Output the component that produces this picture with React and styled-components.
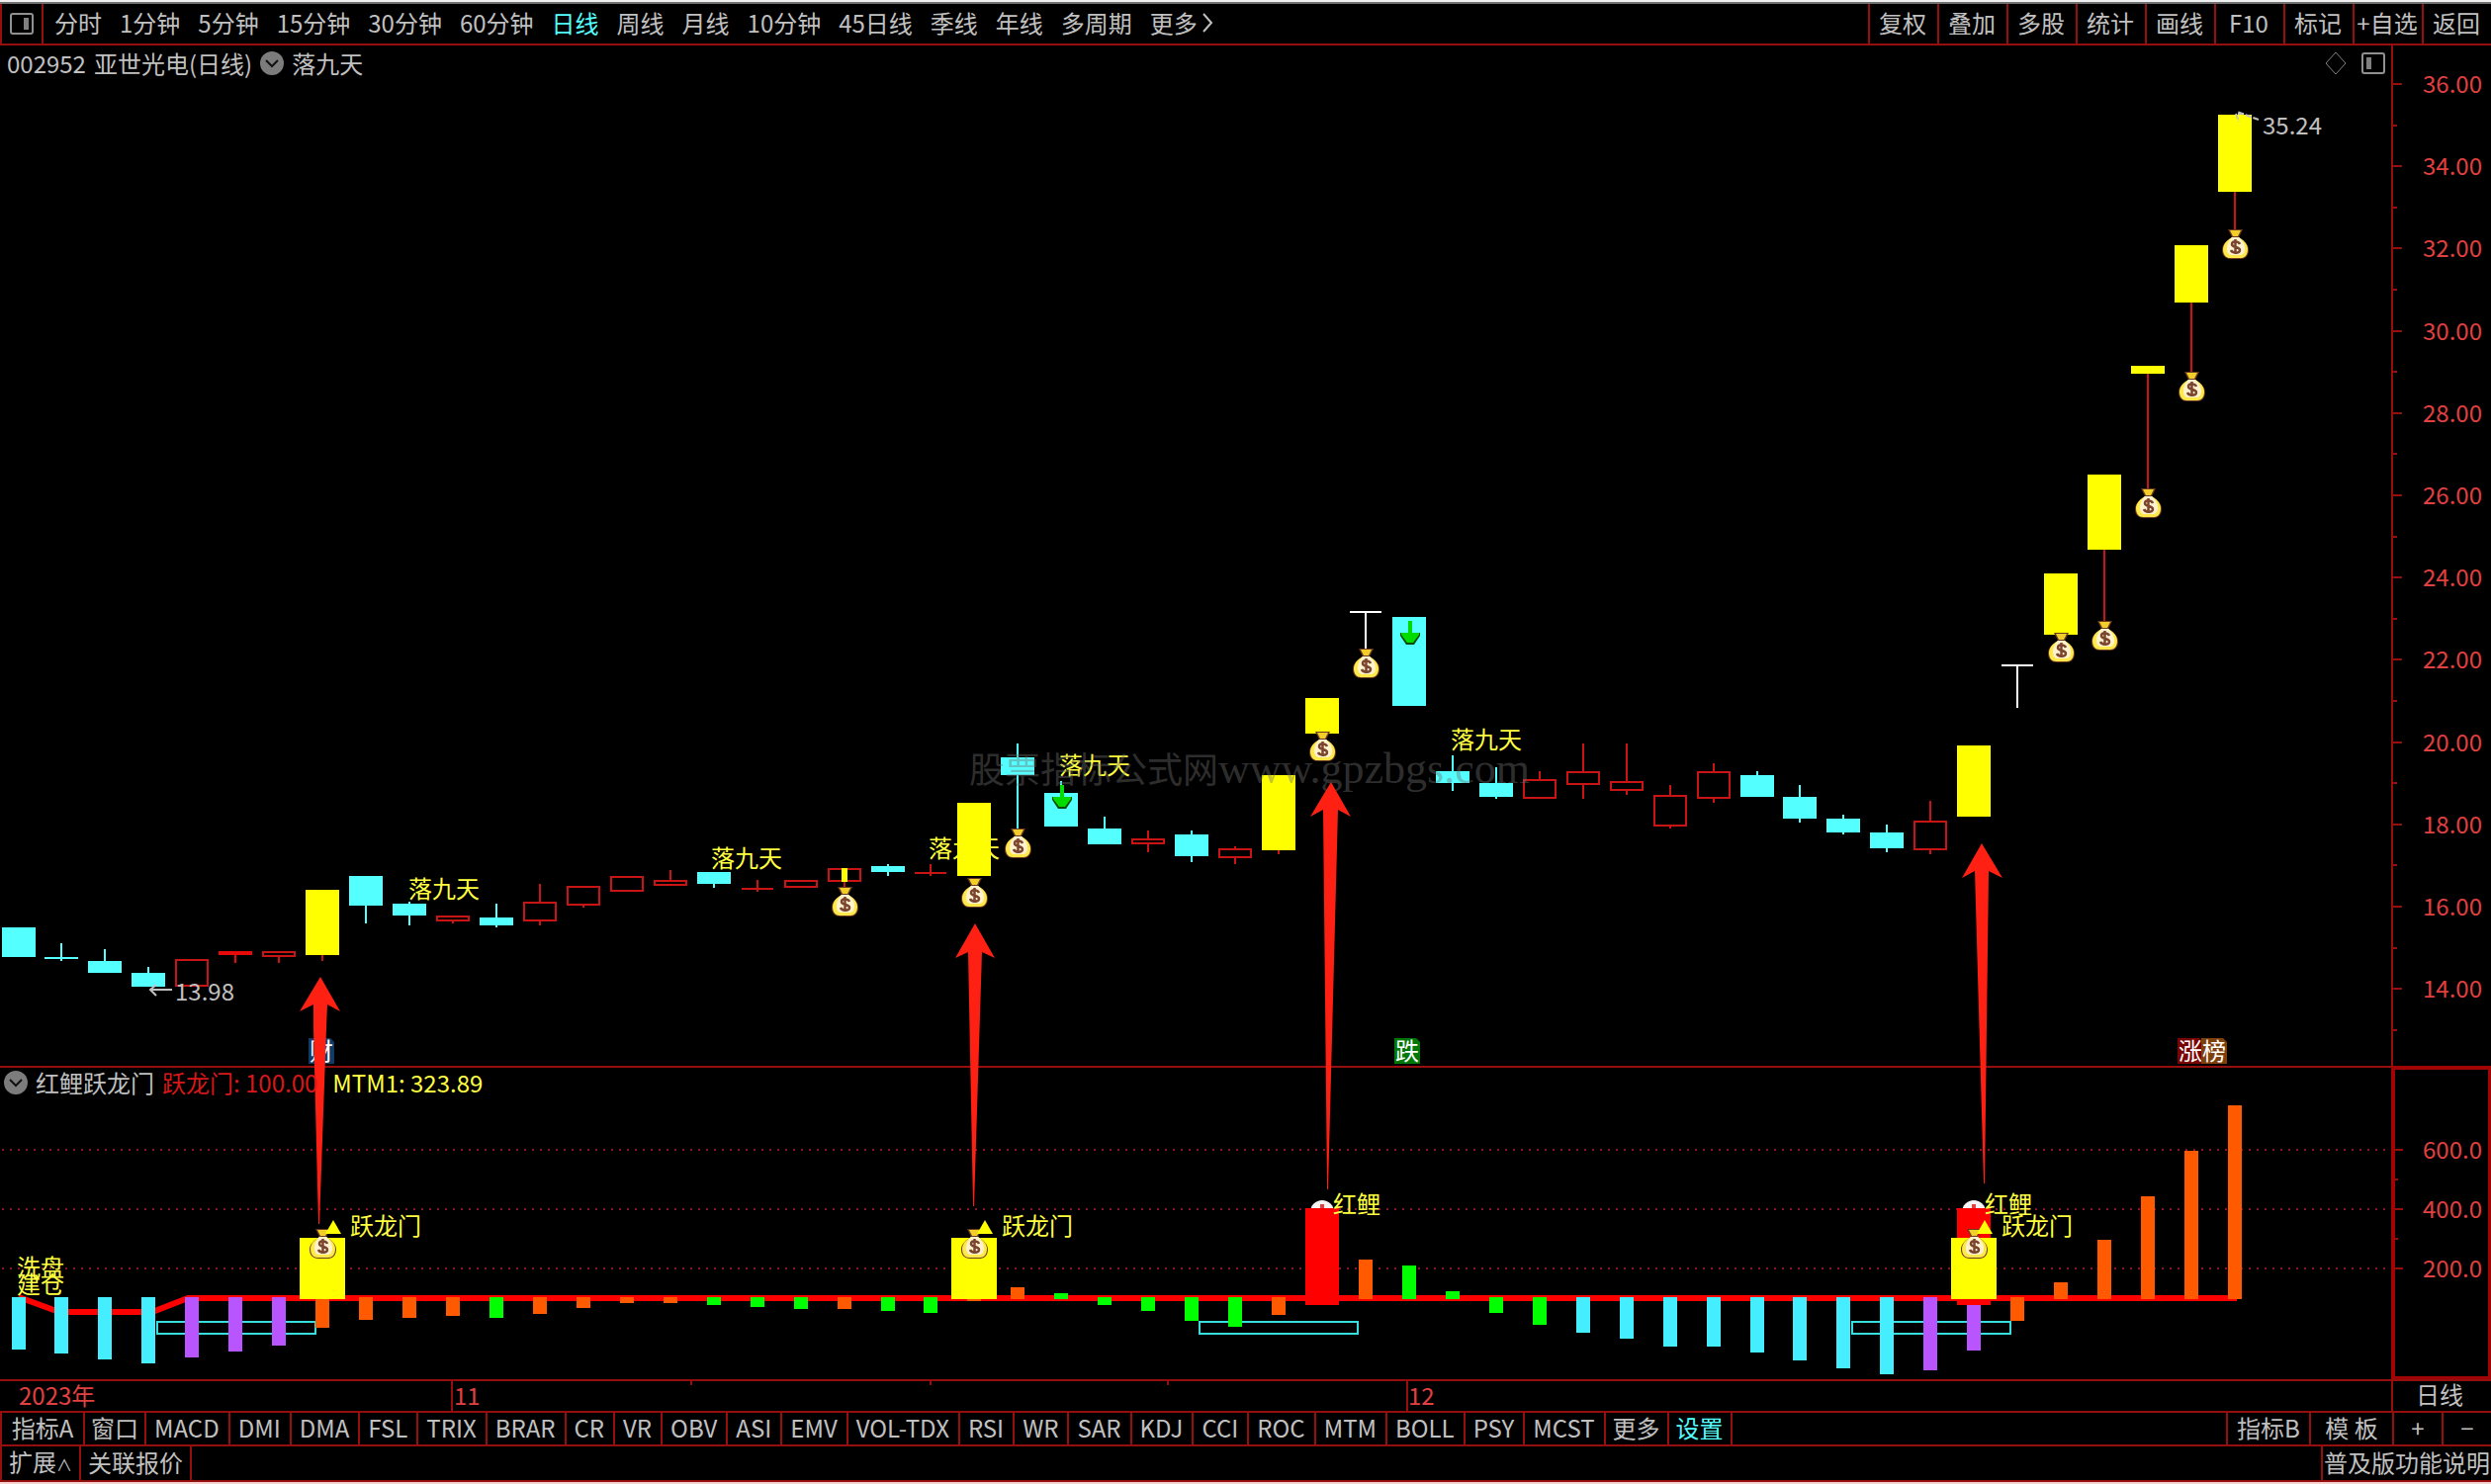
import React from 'react';
import styled, { createGlobalStyle, css } from 'styled-components';

const LINE = '#960f0f';
const GREY = '#c0c0c0';
const CYAN = '#54ffff';
const FONT = '"Noto Sans CJK SC", "Liberation Sans", sans-serif';

const GlobalStyle = createGlobalStyle`
  body {
    margin: 0;
    background: #000;
    color: ${GREY};
    font-family: ${FONT};
    font-size: 24px;
    line-height: 30px;
  }

  button {
    margin: 0;
    padding: 0;
    border: 0;
    background: none;
    color: inherit;
    font: inherit;
    white-space: nowrap;
    cursor: pointer;
  }
`;

const Page = styled.div`
  display: flex;
  flex-direction: column;
  box-sizing: border-box;
  border-top: 2px solid #f0f0f0;
  border-bottom: 2px solid #f8d0d0;
`;

const Toolbar = styled.header`
  display: flex;
  align-items: stretch;
  height: 40px;
  border-top: 2px solid #707070;
  border-bottom: 2px solid ${LINE};
`;

const PanelToggle = styled.button`
  display: flex;
  align-items: center;
  justify-content: center;
  width: 44px;
  border-left: 2px solid ${LINE};
  border-right: 2px solid ${LINE};
`;

const Periods = styled.nav`
  display: flex;
  align-items: center;
  gap: 18px;
  padding: 0 0 2px 11px;
`;

const Period = styled.button`
  display: flex;
  align-items: center;
  color: ${({ $active }) => ($active ? CYAN : GREY)};
`;

const Actions = styled.div`
  display: flex;
  margin-left: auto;
`;

const Action = styled.button`
  box-sizing: border-box;
  width: 70px;
  padding: 0 2px 2px 0;
  border-left: 2px solid ${LINE};
`;

const Charts = styled.main`
  position: relative;
`;

const Panel = styled.section`
  position: relative;
`;

const Plot = styled.svg`
  display: block;
  width: 100%;
  height: auto;
  overflow: visible;
  font-family: ${FONT};
  font-size: 24px;
`;

const Overlay = styled(Plot)`
  position: absolute;
  top: 0;
  left: 0;
  pointer-events: none;
`;

const PanelTitle = styled.div`
  position: absolute;
  top: 0;
  left: 0;
  z-index: 1;
  display: flex;
  align-items: center;
  gap: 8px;
  height: ${({ $height }) => $height}px;
  padding-left: ${({ $indent = 4 }) => $indent}px;
  white-space: pre;
`;

const PanelTools = styled(PanelTitle)`
  left: auto;
  right: 106px;
  gap: 14px;
`;

const Value = styled.span`
  color: ${({ $color }) => $color};
  padding-right: 7px;
`;

const RoundButton = styled.button`
  display: flex;
  width: 24px;
  height: 24px;
`;

const Strip = styled.footer`
  display: flex;
  justify-content: space-between;
  height: ${({ $height }) => $height}px;
  border-bottom: 2px solid ${LINE};
`;

const Tabs = styled.div`
  display: flex;
  border-left: 2px solid ${LINE};
`;

const Tab = styled.button`
  padding: 0 9px 3px 8px;
  border-right: 2px solid ${LINE};
  color: ${({ $active }) => ($active ? CYAN : GREY)};

  ${({ $wide }) => $wide && css`
    box-sizing: border-box;
    width: ${$wide}px;
    padding: 0 0 3px;
  `}

  &:last-child {
    ${({ $open }) => $open && 'border-right: 0;'}
  }
`;

const Caret = styled.span`
  font-size: 16px;
`;

const periods = [
  '分时', '1分钟', '5分钟', '15分钟', '30分钟', '60分钟', '日线', '周线', '月线',
  '10分钟', '45日线', '季线', '年线', '多周期',
];

const actions = ['复权', '叠加', '多股', '统计', '画线', 'F10', '标记', '+自选', '返回'];

const indicators = [
  'MACD', 'DMI', 'DMA', 'FSL', 'TRIX', 'BRAR', 'CR', 'VR', 'OBV', 'ASI', 'EMV', 'VOL-TDX',
  'RSI', 'WR', 'SAR', 'KDJ', 'CCI', 'ROC', 'MTM', 'BOLL', 'PSY', 'MCST',
];

// kind, body top, body bottom, high, low
// c: falling, r: rising, f: filled rising, y: signal, x: doji, t: limit-up open
const candles = [
  ['c', 938, 968], ['c', 968, 970, 954, 972], ['c', 972, 984, 960], ['c', 984, 998, 978],
  ['r', 970, 998], ['f', 962, 966, 962, 974], ['r', 962, 968, 962, 974], ['y', 900, 966, 900, 972],
  ['c', 886, 916, 886, 934], ['c', 914, 926, 912, 936], ['r', 926, 932, 926, 934],
  ['c', 928, 936, 914, 938], ['r', 912, 932, 894, 936], ['r', 896, 916, 896, 918],
  ['r', 886, 902], ['r', 890, 896, 880], ['c', 882, 894, 882, 898], ['x', 898, 900, 890, 902],
  ['r', 890, 898], ['r', 878, 892, 878, 897], ['c', 876, 882, 874, 886], ['x', 882, 884, 874, 886],
  ['y', 812, 886], ['c', 766, 784, 752, 838], ['c', 802, 836, 790], ['c', 838, 854, 826],
  ['r', 848, 854, 840, 862], ['c', 844, 866, 840, 872], ['r', 858, 868, 856, 874],
  ['y', 784, 860, 784, 864], ['y', 706, 742], ['t', 618, 620, 618, 656], ['c', 624, 714],
  ['c', 780, 792, 764, 800], ['c', 792, 806, 776, 808], ['r', 788, 808, 780],
  ['r', 780, 794, 752, 808], ['r', 790, 800, 752, 804], ['r', 804, 836, 794, 838],
  ['r', 780, 808, 772, 812], ['c', 784, 806, 780], ['c', 806, 828, 794, 832],
  ['c', 828, 842, 824, 844], ['c', 842, 858, 834, 862], ['r', 830, 860, 810, 864],
  ['y', 754, 826], ['t', 672, 674, 672, 716], ['y', 580, 642], ['y', 480, 556, 480, 628],
  ['y', 370, 378, 370, 495], ['y', 248, 306, 248, 376], ['y', 116, 194, 116, 232],
];

// colour, free end of the bar
const momentum = [
  ['c', 1365], ['c', 1369], ['c', 1375], ['c', 1379], ['p', 1373], ['p', 1367], ['p', 1361],
  ['o', 1343], ['o', 1335], ['o', 1333], ['o', 1331], ['g', 1333], ['o', 1329], ['o', 1323],
  ['o', 1318], ['o', 1318], ['g', 1320], ['g', 1322], ['g', 1324], ['o', 1324], ['g', 1326],
  ['g', 1328], ['o', 1316], ['o', 1302], ['g', 1308], ['g', 1320], ['g', 1326], ['g', 1336],
  ['g', 1342], ['o', 1330], ['o', 1316], ['o', 1274], ['g', 1280], ['g', 1306], ['g', 1328],
  ['g', 1340], ['c', 1348], ['c', 1354], ['c', 1362], ['c', 1362], ['c', 1368], ['c', 1376],
  ['c', 1384], ['c', 1390], ['p', 1386], ['p', 1366], ['o', 1336], ['o', 1297], ['o', 1254],
  ['o', 1210], ['o', 1164], ['o', 1118],
];

const momentumColors = { c: '#44eeff', p: '#b855ff', o: '#ff5a00', g: '#00ff00' };
const bodyColors = { c: CYAN, r: '#c81414', f: '#e60a0a', y: '#ffff00', x: '#c81414', t: '#ffffff' };
const wickColors = { ...bodyColors, y: '#c81414' };

const bags = [
  [19, 897], [22, 888], [23, 838], [30, 740], [31, 656], [47, 640], [48, 628], [49, 494],
  [50, 376], [51, 232],
];

const fallLabels = [[413, 899], [719, 868], [939, 858], [1071, 774], [1467, 748]];
const prices = [36, 34, 32, 30, 28, 26, 24, 22, 20, 18, 16, 14];
const priceY = price => Math.round(85 + (36 - price) * 41.6);
const barX = index => Math.floor(19 + index * 43.95);

const PanelIcon = ({ left }) => (
  <svg width="26" height="24" viewBox="0 0 26 24" fill="none" stroke="#909090" strokeWidth="2">
    <rect x="2" y="2" width="22" height="20" rx="2" />
    <rect x={left ? 6 : 15} y="6" width="5" height="12" fill="#808080" stroke="none" />
  </svg>
);

const ChevronDisc = () => (
  <svg width="24" height="24" viewBox="0 0 24 24">
    <circle cx="12" cy="12" r="12" fill="#7c7c7c" />
    <path d="M6 9l6 6 6-6" fill="none" stroke="#111" strokeWidth="2" />
  </svg>
);

const Bag = ({ x, y }) => (
  <g transform={`translate(${x - 13} ${y})`}>
    <path d="M6 0h15l-4 8c5 3 10 7 10 13 0 6-4 9-8 9H9c-5 0-9-3-9-9C0 15 5 11 10 8z" fill="#6b3a20" />
    <path d="M8 1h11l-3 6h-5z" fill="#f2cf28" />
    <path d="M10 8h7c5 3 9 7 9 12 0 6-3 9-7 9H8c-4 0-7-3-7-9 0-5 4-9 9-12z" fill="#ffe94a" />
    <path d="M10 8h7c4 4 6 7 6 11 0 5-2 7-5 7H10c-3 0-5-2-5-7 0-4 2-8 5-11z" fill="#fff3cf" />
    <path
      d="M18 15c-1-3-8-4-8 0 0 4 8 2 8 6 0 4-8 3-9 0M13.500 10v15"
      fill="none"
      stroke="#7b4530"
      strokeWidth="2.500"
    />
  </g>
);

const SellArrow = ({ x, y }) => (
  <g>
    <path d={`M${x - 10} ${y + 12}h20v3l-6 9h-8l-6-9z`} fill="#064a06" />
    <path d={`M${x - 2} ${y}h4v12h7v2l-6 8h-6l-6-8v-2h7z`} fill="#00dc00" />
  </g>
);

const Candle = ({ x, data }) => {
  const [kind, top, bottom, high = top, low = bottom] = data;
  const half = kind === 'x' || kind === 't' ? 16 : 17;
  return (
    <g>
      {high < top && <rect x={x - 1} y={high} width="2" height={top - high} fill={wickColors[kind]} />}
      {low > bottom && <rect x={x - 1} y={bottom} width="2" height={low - bottom} fill={wickColors[kind]} />}
      {kind === 'r' ? (
        <rect
          x={x - 16}
          y={top + 1}
          width="32"
          height={bottom - top - 2}
          fill="none"
          stroke={bodyColors.r}
          strokeWidth="2"
        />
      ) : (
        <rect x={x - half} y={top} width={half * 2} height={bottom - top} fill={bodyColors[kind]} />
      )}
    </g>
  );
};

const Badge = ({ x, fill, children }) => (
  <g>
    <path d={`M${x} 1050h22l4 4v22h-26z`} fill={fill} />
    <text x={x + 1} y="1072" fill="#fff">{children}</text>
  </g>
);

const PriceChart = () => (
  <Plot viewBox="0 46 2519 1034" role="img" aria-label="亚世光电 日线">
    {fallLabels.map(([x, y]) => (
      <text key={x} x={x} y={y + 9} fill="#ffff40">落九天</text>
    ))}
    {candles.map((data, i) => <Candle key={i} x={barX(i)} data={data} />)}
    <rect x={barX(19) - 3} y="878" width="6" height="14" fill="#ffff00" />
    <SellArrow x={1074} y={794} />
    <SellArrow x={1426} y={628} />
    {bags.map(([i, y]) => <Bag key={i} x={barX(i)} y={y} />)}

    <g fill="none" stroke={GREY} strokeWidth="2">
      <path d="M174 1001h-22M158 996l-6 5 6 6" />
      <path d="M2284 121l-22-8M2269 115h-8l3 8" strokeDasharray="6 2" />
    </g>
    <text x="177" y="1012" fill={GREY}>13.98</text>
    <text x="2288" y="136" fill={GREY}>35.24</text>

    <text x="980" y="792" fill="#707070" fillOpacity="0.42" fontSize="36" fontFamily='"Liberation Serif", "Noto Sans CJK SC", serif'>
      股票指标公式网
      <tspan fontSize="44">www.gpzbgs.com</tspan>
    </text>

    <Badge x={312} fill="#123a66">财</Badge>
    <Badge x={1410} fill="#007808">跌</Badge>
    <Badge x={2202} fill="#780404">涨</Badge>
    <Badge x={2226} fill="#80400c">榜</Badge>

    <g fill={LINE}>
      <rect x="0" y="1078" width="2519" height="2" />
      <rect x="2418" y="46" width="2" height="1034" />
      {prices.map(price => (
        <g key={price}>
          <rect x="2420" y={priceY(price) - 1} width="9" height="2" />
          <rect x="2420" y={priceY(price - 1) - 1} width="4" height="2" />
        </g>
      ))}
    </g>
    <g fill="#e04040" textAnchor="end">
      {prices.map(price => (
        <text key={price} x="2510" y={priceY(price) + 9}>{price.toFixed(2)}</text>
      ))}
    </g>
  </Plot>
);

const Carp = ({ index }) => {
  const x = barX(index);
  return (
    <g>
      <circle cx={x} cy="1226" r="12" fill="#f4f4f4" />
      <rect x={x - 2} y="1218" width="4" height="6" fill="#e04040" />
      <rect x={x - 17} y="1222" width="34" height="98" fill="#ff0000" />
      <text x={x + 11} y="1227" fill="#ffff40">红鲤</text>
    </g>
  );
};

const DragonGate = ({ index }) => {
  const x = barX(index);
  return (
    <g>
      <rect x={x - 23} y="1252" width="46" height="62" fill="#ffff00" />
      <Bag x={x} y={1243} />
      <path d={`M${x + 11} 1234l8 14h-16z`} fill="#ffff00" />
      <text x={x + 28} y="1249" fill="#ffff40">跃龙门</text>
    </g>
  );
};

const MomentumChart = () => (
  <Plot viewBox="0 1080 2519 349" role="img" aria-label="红鲤跃龙门">
    {[1163, 1223, 1283].map(y => (
      <line key={y} x1="2" x2="2418" y1={y} y2={y} stroke="#8c1430" strokeWidth="2" strokeDasharray="2 6" />
    ))}
    <path
      d="M19 1312L60 1327H154L190 1313H2262"
      fill="none"
      stroke="#ff0000"
      strokeWidth="6"
    />
    <g fill="none" stroke="#38dede" strokeWidth="2">
      <rect x="159" y="1337" width="160" height="12" />
      <rect x="1213" y="1337" width="160" height="12" />
      <rect x="1873" y="1337" width="160" height="12" />
    </g>
    {momentum.map(([color, end], i) => {
      const up = end < 1312;
      return (
        <rect
          key={i}
          x={barX(i) - 7}
          y={up ? end : 1312}
          width="14"
          height={up ? 1314 - end : end - 1312}
          fill={momentumColors[color]}
        />
      );
    })}
    <text x="17" y="1291" fill="#ffff40">洗盘</text>
    <text x="17" y="1308" fill="#ffff40">建仓</text>
    <Carp index={30} />
    <Carp index={45} />
    <DragonGate index={7} />
    <DragonGate index={22} />
    <DragonGate index={45} />

    <rect x="2420" y="1080" width="98" height="314" fill="none" stroke="#a00404" strokeWidth="4" />
    <g fill={LINE}>
      <rect x="2422" y="1162" width="8" height="2" />
      <rect x="2422" y="1222" width="8" height="2" />
      <rect x="2422" y="1282" width="8" height="2" />
      <rect x="2422" y="1192" width="3" height="2" />
      <rect x="2422" y="1252" width="3" height="2" />
      <rect x="0" y="1395" width="2519" height="2" />
      <rect x="0" y="1427" width="2519" height="2" />
      <rect x="2418" y="1397" width="2" height="30" />
      <rect x="456" y="1397" width="2" height="30" />
      <rect x="1422" y="1397" width="2" height="30" />
      {[698, 940, 1180].map(x => <rect key={x} x={x} y="1397" width="2" height="4" />)}
    </g>
    <g fill="#e04040">
      <text x="2510" y="1172" textAnchor="end">600.0</text>
      <text x="2510" y="1232" textAnchor="end">400.0</text>
      <text x="2510" y="1292" textAnchor="end">200.0</text>
      <text x="19" y="1421">2023年</text>
      <text x="459" y="1421">11</text>
      <text x="1424" y="1421">12</text>
    </g>
    <text x="2443" y="1420" fill={GREY}>日线</text>
  </Plot>
);

const Arrows = () => (
  <Overlay viewBox="0 46 2519 1383" fill="#ff2014" aria-hidden="true">
    <path d="M324 988l20 35-13-7-1 24-7 198h-1l-5-198v-24l-14 7z" />
    <path d="M986 934l20 35-13-6-8 257h-1l-5-257-13 6z" />
    <path d="M1346 791l20 35-13-7-10 384h-1l-4-384-13 7z" />
    <path d="M2004 853l21 35-14-7-4 316h-1l-9-316-13 7z" />
  </Overlay>
);

const App = () => (
  <Page>
    <GlobalStyle />
    <Toolbar>
      <PanelToggle aria-label="侧栏"><PanelIcon /></PanelToggle>
      <Periods>
        {periods.map(name => <Period key={name} $active={name === '日线'}>{name}</Period>)}
        <Period>
          更多
          <svg width="16" height="22" viewBox="0 0 16 22" fill="none" stroke={GREY} strokeWidth="2">
            <path d="M6 2l8 9-8 9" />
          </svg>
        </Period>
      </Periods>
      <Actions>
        {actions.map(name => <Action key={name}>{name}</Action>)}
      </Actions>
    </Toolbar>

    <Charts>
      <Panel>
        <PanelTitle $height={36} $indent={7}>
          <span>002952</span>
          <span>亚世光电(日线)</span>
          <RoundButton aria-label="指标菜单"><ChevronDisc /></RoundButton>
          <span>落九天</span>
        </PanelTitle>
        <PanelTools $height={36}>
          <svg width="22" height="24" viewBox="0 0 22 24" fill="none" stroke="#808080">
            <path d="M11 1l10 11-10 11L1 12z" />
          </svg>
          <PanelIcon left />
        </PanelTools>
        <PriceChart />
      </Panel>
      <Panel>
        <PanelTitle $height={30}>
          <RoundButton aria-label="指标菜单"><ChevronDisc /></RoundButton>
          <span>红鲤跃龙门</span>
          <Value $color="#d81818">跃龙门: 100.00</Value>
          <Value $color="#ffff40">MTM1: 323.89</Value>
        </PanelTitle>
        <MomentumChart />
      </Panel>
      <Arrows />
    </Charts>

    <Strip $height={32}>
      <Tabs>
        <Tab $wide={84}>指标A</Tab>
        <Tab $wide={62}>窗口</Tab>
        {indicators.map(name => <Tab key={name}>{name}</Tab>)}
        <Tab $wide={64}>更多</Tab>
        <Tab $wide={64} $active>设置</Tab>
      </Tabs>
      <Tabs>
        <Tab $wide={84}>指标B</Tab>
        <Tab $wide={84}>模 板</Tab>
        <Tab $wide={50}>+</Tab>
        <Tab $wide={48} $open>−</Tab>
      </Tabs>
    </Strip>
    <Strip $height={34}>
      <Tabs>
        <Tab $wide={80}>扩展<Caret>∧</Caret></Tab>
        <Tab $wide={112}>关联报价</Tab>
      </Tabs>
      <Tabs>
        <Tab $wide={170} $open>普及版功能说明</Tab>
      </Tabs>
    </Strip>
  </Page>
);

export default App;
